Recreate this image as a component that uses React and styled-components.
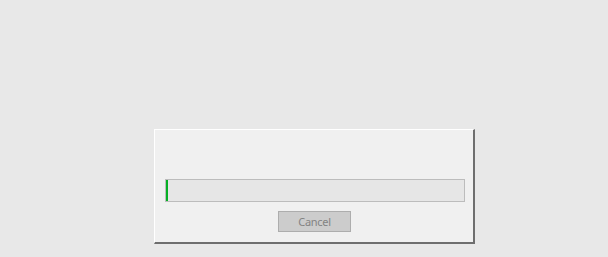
import styled, { createGlobalStyle } from 'styled-components'

const GlobalStyle = createGlobalStyle`
    html, body {
        margin: 0;
        padding: 0;
        background-color: #e8e8e8;
        font-family: "Noto Sans", "Open Sans", sans-serif;
    }
`
const Page = styled.div`
    width: 608px;
    height: 257px;
    box-sizing: border-box;
    padding: 129px 0 0 154px;
`
const Dialog = styled.div`
    width: 321px;
    height: 115px;
    box-sizing: border-box;
    background-color: #f0f0f0;
    border-top: 1px solid #ffffff;
    border-left: 1px solid #ffffff;
    border-right: 2px solid #6e6e6e;
    border-bottom: 2px solid #6e6e6e;
    padding: 49px 9px 0 10px;
    display: flex;
    flex-direction: column;
    align-items: center;
    gap: 9px;
`
const Track = styled.div`
    align-self: flex-start;
    flex-shrink: 0;
    width: 300px;
    height: 23px;
    box-sizing: border-box;
    background-color: #e6e6e6;
    border: 1px solid #bcbcbc;
    display: flex;
`
const Fill = styled.div`
    height: 100%;
    background-color: #06b025;
`
const CancelButton = styled.button`
    width: 73px;
    height: 21px;
    box-sizing: border-box;
    background-color: #cccccc;
    border: 1px solid #adadad;
    color: #838383;
    font-family: "Noto Sans", "Open Sans", sans-serif;
    font-size: 11px;
    letter-spacing: -0.3px;
    padding: 0;
    line-height: 19px;
`

const App = () => {
    const progress = 2
    return (
        <>
            <GlobalStyle />
            <Page>
                <Dialog>
                    <Track>
                        <Fill style={{ width: progress + 'px' }} />
                    </Track>
                    <CancelButton disabled>Cancel</CancelButton>
                </Dialog>
            </Page>
        </>
    )
}

export default App
